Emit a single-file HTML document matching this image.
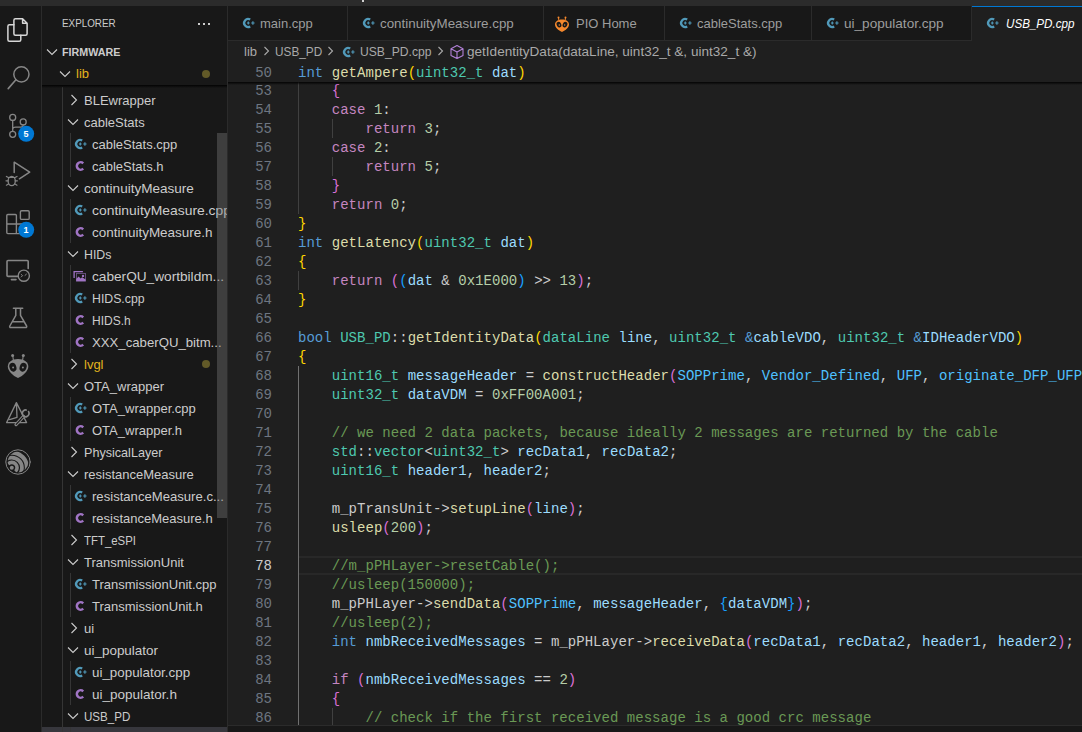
<!DOCTYPE html>
<html><head><meta charset="utf-8"><style>
*{box-sizing:border-box;margin:0;padding:0}
html,body{width:1082px;height:732px;overflow:hidden;background:#181818}
body{position:relative;font-family:"Liberation Sans",sans-serif;color:#cccccc}
.abs{position:absolute}
.code{font-family:"Liberation Mono",monospace;font-size:14px;line-height:19px;white-space:pre;color:#cccccc;letter-spacing:0.03px}
.ln{position:absolute;left:228px;width:44px;text-align:right;font-family:"Liberation Mono",monospace;font-size:14px;line-height:19px;color:#6e7681}
.cl{position:absolute;left:298px;height:19px}
</style></head><body>

<div class="abs" style="left:0;top:0;width:1082px;height:6px;background:#2b2b2b"></div>
<div class="abs" style="left:362px;top:0;width:2px;height:2px;background:#d0d0d0"></div>
<div class="abs" style="left:41px;top:6px;width:1px;height:726px;background:#2b2b2b"></div>
<div class="abs" style="left:227px;top:6px;width:1px;height:726px;background:#2b2b2b"></div>
<div class="abs" style="left:228px;top:6px;width:854px;height:34px;background:#181818"></div>
<div class="abs" style="left:228px;top:40px;width:854px;height:1px;background:#2b2b2b"></div>
<div class="abs" style="left:228px;top:41px;width:854px;height:684px;background:#1f1f1f"></div>
<div class="abs" style="left:228px;top:725px;width:854px;height:1px;background:#2b2b2b"></div>
<div class="abs" style="left:228px;top:726px;width:854px;height:6px;background:#181818"></div>
<div class="abs" style="left:228px;top:6px;width:120px;height:34px;background:#181818"></div>
<div class="abs" style="left:347px;top:6px;width:1px;height:34px;background:#2b2b2b"></div>
<svg class="abs" style="left:241px;top:15px" width="16" height="16" viewBox="0 0 16 16"><path d="M9.2 4.5A4.05 4.05 0 1 0 9.2 11.5" fill="none" stroke="#519aba" stroke-width="2.3"/><path d="M5.9 8h2.8M7.3 6.6v2.8M10.2 8h3.4M11.9 6.3v3.4" stroke="#519aba" stroke-width="1.15"/></svg>
<div class="abs" style="left:260px;top:16px;font-family:'Liberation Sans',sans-serif;font-size:13px;color:#9d9d9d;line-height:15px;white-space:pre;transform-origin:0 0;transform:scaleX(1.0000);">main.cpp</div>
<div class="abs" style="left:348px;top:6px;width:196px;height:34px;background:#181818"></div>
<div class="abs" style="left:543px;top:6px;width:1px;height:34px;background:#2b2b2b"></div>
<svg class="abs" style="left:361px;top:15px" width="16" height="16" viewBox="0 0 16 16"><path d="M9.2 4.5A4.05 4.05 0 1 0 9.2 11.5" fill="none" stroke="#519aba" stroke-width="2.3"/><path d="M5.9 8h2.8M7.3 6.6v2.8M10.2 8h3.4M11.9 6.3v3.4" stroke="#519aba" stroke-width="1.15"/></svg>
<div class="abs" style="left:380px;top:16px;font-family:'Liberation Sans',sans-serif;font-size:13px;color:#9d9d9d;line-height:15px;white-space:pre;transform-origin:0 0;transform:scaleX(1.0286);">continuityMeasure.cpp</div>
<div class="abs" style="left:544px;top:6px;width:121px;height:34px;background:#181818"></div>
<div class="abs" style="left:664px;top:6px;width:1px;height:34px;background:#2b2b2b"></div>
<svg class="abs" style="left:554px;top:15px" width="16" height="18" viewBox="0 0 16 18"><path d="M8 4.6C3.6 4.6 1 6.8 1 9.6c0 3 3.4 6 7 7.4 3.6-1.4 7-4.4 7-7.4 0-2.8-2.6-5-7-5z" fill="#f5882d"/><ellipse cx="5" cy="9.6" rx="2.3" ry="2.8" transform="rotate(-25 5 9.6)" fill="#181818"/><ellipse cx="11" cy="9.6" rx="2.3" ry="2.8" transform="rotate(25 11 9.6)" fill="#181818"/><circle cx="5.3" cy="10" r="0.7" fill="#f5882d"/><circle cx="10.7" cy="10" r="0.7" fill="#f5882d"/><path d="M4.8 5 4.5 2.6M11.2 5l.3-2.4" stroke="#f5882d" stroke-width="1"/><circle cx="4.5" cy="2.4" r="1" fill="#f5882d"/><circle cx="11.5" cy="2.4" r="1" fill="#f5882d"/></svg>
<div class="abs" style="left:576px;top:16px;font-family:'Liberation Sans',sans-serif;font-size:13px;color:#9d9d9d;line-height:15px;white-space:pre;transform-origin:0 0;transform:scaleX(1.0000);">PIO Home</div>
<div class="abs" style="left:665px;top:6px;width:147px;height:34px;background:#181818"></div>
<div class="abs" style="left:811px;top:6px;width:1px;height:34px;background:#2b2b2b"></div>
<svg class="abs" style="left:678px;top:15px" width="16" height="16" viewBox="0 0 16 16"><path d="M9.2 4.5A4.05 4.05 0 1 0 9.2 11.5" fill="none" stroke="#519aba" stroke-width="2.3"/><path d="M5.9 8h2.8M7.3 6.6v2.8M10.2 8h3.4M11.9 6.3v3.4" stroke="#519aba" stroke-width="1.15"/></svg>
<div class="abs" style="left:697px;top:16px;font-family:'Liberation Sans',sans-serif;font-size:13px;color:#9d9d9d;line-height:15px;white-space:pre;transform-origin:0 0;transform:scaleX(1.0000);">cableStats.cpp</div>
<div class="abs" style="left:812px;top:6px;width:160px;height:34px;background:#181818"></div>
<div class="abs" style="left:971px;top:6px;width:1px;height:34px;background:#2b2b2b"></div>
<svg class="abs" style="left:825px;top:15px" width="16" height="16" viewBox="0 0 16 16"><path d="M9.2 4.5A4.05 4.05 0 1 0 9.2 11.5" fill="none" stroke="#519aba" stroke-width="2.3"/><path d="M5.9 8h2.8M7.3 6.6v2.8M10.2 8h3.4M11.9 6.3v3.4" stroke="#519aba" stroke-width="1.15"/></svg>
<div class="abs" style="left:844px;top:16px;font-family:'Liberation Sans',sans-serif;font-size:13px;color:#9d9d9d;line-height:15px;white-space:pre;transform-origin:0 0;transform:scaleX(1.0438);">ui_populator.cpp</div>
<div class="abs" style="left:972px;top:6px;width:110px;height:35px;background:#1f1f1f"></div>
<svg class="abs" style="left:985px;top:15px" width="16" height="16" viewBox="0 0 16 16"><path d="M9.2 4.5A4.05 4.05 0 1 0 9.2 11.5" fill="none" stroke="#519aba" stroke-width="2.3"/><path d="M5.9 8h2.8M7.3 6.6v2.8M10.2 8h3.4M11.9 6.3v3.4" stroke="#519aba" stroke-width="1.15"/></svg>
<div class="abs" style="left:1006px;top:16px;font-family:'Liberation Sans',sans-serif;font-size:13px;color:#ffffff;line-height:15px;font-style:italic;white-space:pre;transform-origin:0 0;transform:scaleX(0.8943);">USB_PD.cpp</div>
<div class="abs" style="left:971px;top:6px;width:111px;height:1px;background:#0078d4"></div>
<div class="abs" style="left:971px;top:6px;width:1px;height:35px;background:#2b2b2b"></div>
<div class="abs" style="left:244px;top:44px;font-family:'Liberation Sans',sans-serif;font-size:13px;color:#a9a9a9;line-height:15px;white-space:pre;transform-origin:0 0;transform:scaleX(1.0000);">lib</div>
<svg class="abs" style="left:263px;top:45px" width="8" height="12" viewBox="0 0 8 12"><path d="M1.5 2l4 4-4 4" fill="none" stroke="#a9a9a9" stroke-width="1.1"/></svg>
<div class="abs" style="left:275px;top:44px;font-family:'Liberation Sans',sans-serif;font-size:13px;color:#a9a9a9;line-height:15px;white-space:pre;transform-origin:0 0;transform:scaleX(0.9071);">USB_PD</div>
<svg class="abs" style="left:327px;top:45px" width="8" height="12" viewBox="0 0 8 12"><path d="M1.5 2l4 4-4 4" fill="none" stroke="#a9a9a9" stroke-width="1.1"/></svg>
<svg class="abs" style="left:341px;top:44px" width="16" height="16" viewBox="0 0 16 16"><path d="M9.2 4.5A4.05 4.05 0 1 0 9.2 11.5" fill="none" stroke="#519aba" stroke-width="2.3"/><path d="M5.9 8h2.8M7.3 6.6v2.8M10.2 8h3.4M11.9 6.3v3.4" stroke="#519aba" stroke-width="1.15"/></svg>
<div class="abs" style="left:360px;top:44px;font-family:'Liberation Sans',sans-serif;font-size:13px;color:#a9a9a9;line-height:15px;white-space:pre;transform-origin:0 0;transform:scaleX(0.9335);">USB_PD.cpp</div>
<svg class="abs" style="left:437px;top:45px" width="8" height="12" viewBox="0 0 8 12"><path d="M1.5 2l4 4-4 4" fill="none" stroke="#a9a9a9" stroke-width="1.1"/></svg>
<svg class="abs" style="left:449px;top:44px" width="16" height="16" viewBox="0 0 16 16"><path d="M8 1.6l6 3.2v6.6L8 14.6l-6-3.2V4.8z M2 4.8 8 8l6-3.2 M8 8v6.6" fill="none" stroke="#b180d7" stroke-width="1.1" stroke-linejoin="round"/></svg>
<div class="abs" style="left:467px;top:44px;font-family:'Liberation Sans',sans-serif;font-size:13px;color:#a9a9a9;line-height:15px;white-space:pre;transform-origin:0 0;transform:scaleX(1.0431);">getIdentityData(dataLine, uint32_t &amp;, uint32_t &amp;)</div>
<div class="abs" style="left:299px;top:556px;width:783px;height:19px;border-top:2px solid #282828;border-bottom:2px solid #282828"></div>
<div class="abs" style="left:298px;top:81px;width:1px;height:133px;background:#404040"></div>
<div class="abs" style="left:332px;top:119px;width:1px;height:19px;background:#404040"></div>
<div class="abs" style="left:332px;top:157px;width:1px;height:19px;background:#404040"></div>
<div class="abs" style="left:298px;top:271px;width:1px;height:19px;background:#404040"></div>
<div class="abs" style="left:298px;top:366px;width:1px;height:359px;background:#707070"></div>
<div class="abs" style="left:332px;top:708px;width:1px;height:17px;background:#404040"></div>
<div class="code">
<div class="ln" style="top:82px;color:#6e7681">53</div>
<div class="cl" style="top:82px">    <span style="color:#da70d6">{</span></div>
<div class="ln" style="top:101px;color:#6e7681">54</div>
<div class="cl" style="top:101px">    <span style="color:#c586c0">case</span> <span style="color:#b5cea8">1</span>:</div>
<div class="ln" style="top:120px;color:#6e7681">55</div>
<div class="cl" style="top:120px">        <span style="color:#c586c0">return</span> <span style="color:#b5cea8">3</span>;</div>
<div class="ln" style="top:139px;color:#6e7681">56</div>
<div class="cl" style="top:139px">    <span style="color:#c586c0">case</span> <span style="color:#b5cea8">2</span>:</div>
<div class="ln" style="top:158px;color:#6e7681">57</div>
<div class="cl" style="top:158px">        <span style="color:#c586c0">return</span> <span style="color:#b5cea8">5</span>;</div>
<div class="ln" style="top:177px;color:#6e7681">58</div>
<div class="cl" style="top:177px">    <span style="color:#da70d6">}</span></div>
<div class="ln" style="top:196px;color:#6e7681">59</div>
<div class="cl" style="top:196px">    <span style="color:#c586c0">return</span> <span style="color:#b5cea8">0</span>;</div>
<div class="ln" style="top:215px;color:#6e7681">60</div>
<div class="cl" style="top:215px"><span style="color:#ffd700">}</span></div>
<div class="ln" style="top:234px;color:#6e7681">61</div>
<div class="cl" style="top:234px"><span style="color:#569cd6">int</span> <span style="color:#dcdcaa">getLatency</span><span style="color:#ffd700">(</span><span style="color:#4ec9b0">uint32_t</span> <span style="color:#9cdcfe">dat</span><span style="color:#ffd700">)</span></div>
<div class="ln" style="top:253px;color:#6e7681">62</div>
<div class="cl" style="top:253px"><span style="color:#ffd700">{</span></div>
<div class="ln" style="top:272px;color:#6e7681">63</div>
<div class="cl" style="top:272px">    <span style="color:#c586c0">return</span> <span style="color:#da70d6">(</span><span style="color:#179fff">(</span><span style="color:#9cdcfe">dat</span> &amp; <span style="color:#b5cea8">0x1E000</span><span style="color:#179fff">)</span> &gt;&gt; <span style="color:#b5cea8">13</span><span style="color:#da70d6">)</span>;</div>
<div class="ln" style="top:291px;color:#6e7681">64</div>
<div class="cl" style="top:291px"><span style="color:#ffd700">}</span></div>
<div class="ln" style="top:310px;color:#6e7681">65</div>
<div class="cl" style="top:310px"></div>
<div class="ln" style="top:329px;color:#6e7681">66</div>
<div class="cl" style="top:329px"><span style="color:#569cd6">bool</span> <span style="color:#4ec9b0">USB_PD</span>::<span style="color:#dcdcaa">getIdentityData</span><span style="color:#ffd700">(</span><span style="color:#4ec9b0">dataLine</span> <span style="color:#9cdcfe">line</span>, <span style="color:#4ec9b0">uint32_t</span> <span style="color:#569cd6">&amp;</span><span style="color:#9cdcfe">cableVDO</span>, <span style="color:#4ec9b0">uint32_t</span> <span style="color:#569cd6">&amp;</span><span style="color:#9cdcfe">IDHeaderVDO</span><span style="color:#ffd700">)</span></div>
<div class="ln" style="top:348px;color:#6e7681">67</div>
<div class="cl" style="top:348px"><span style="color:#ffd700">{</span></div>
<div class="ln" style="top:367px;color:#6e7681">68</div>
<div class="cl" style="top:367px">    <span style="color:#4ec9b0">uint16_t</span> <span style="color:#9cdcfe">messageHeader</span> = <span style="color:#dcdcaa">constructHeader</span><span style="color:#da70d6">(</span><span style="color:#4fc1ff">SOPPrime</span>, <span style="color:#4fc1ff">Vendor_Defined</span>, <span style="color:#4fc1ff">UFP</span>, <span style="color:#4fc1ff">originate_DFP_UFP</span>, </div>
<div class="ln" style="top:386px;color:#6e7681">69</div>
<div class="cl" style="top:386px">    <span style="color:#4ec9b0">uint32_t</span> <span style="color:#9cdcfe">dataVDM</span> = <span style="color:#b5cea8">0xFF00A001</span>;</div>
<div class="ln" style="top:405px;color:#6e7681">70</div>
<div class="cl" style="top:405px"></div>
<div class="ln" style="top:424px;color:#6e7681">71</div>
<div class="cl" style="top:424px">    <span style="color:#6a9955">// we need 2 data packets, because ideally 2 messages are returned by the cable</span></div>
<div class="ln" style="top:443px;color:#6e7681">72</div>
<div class="cl" style="top:443px">    <span style="color:#4ec9b0">std</span>::<span style="color:#4ec9b0">vector</span>&lt;<span style="color:#4ec9b0">uint32_t</span>&gt; <span style="color:#9cdcfe">recData1</span>, <span style="color:#9cdcfe">recData2</span>;</div>
<div class="ln" style="top:462px;color:#6e7681">73</div>
<div class="cl" style="top:462px">    <span style="color:#4ec9b0">uint16_t</span> <span style="color:#9cdcfe">header1</span>, <span style="color:#9cdcfe">header2</span>;</div>
<div class="ln" style="top:481px;color:#6e7681">74</div>
<div class="cl" style="top:481px"></div>
<div class="ln" style="top:500px;color:#6e7681">75</div>
<div class="cl" style="top:500px">    m_pTransUnit-&gt;<span style="color:#dcdcaa">setupLine</span><span style="color:#da70d6">(</span><span style="color:#9cdcfe">line</span><span style="color:#da70d6">)</span>;</div>
<div class="ln" style="top:519px;color:#6e7681">76</div>
<div class="cl" style="top:519px">    <span style="color:#dcdcaa">usleep</span><span style="color:#da70d6">(</span><span style="color:#b5cea8">200</span><span style="color:#da70d6">)</span>;</div>
<div class="ln" style="top:538px;color:#6e7681">77</div>
<div class="cl" style="top:538px"></div>
<div class="ln" style="top:557px;color:#cccccc">78</div>
<div class="cl" style="top:557px">    <span style="color:#6a9955">//m_pPHLayer-&gt;resetCable();</span></div>
<div class="ln" style="top:576px;color:#6e7681">79</div>
<div class="cl" style="top:576px">    <span style="color:#6a9955">//usleep(150000);</span></div>
<div class="ln" style="top:595px;color:#6e7681">80</div>
<div class="cl" style="top:595px">    m_pPHLayer-&gt;<span style="color:#dcdcaa">sendData</span><span style="color:#da70d6">(</span><span style="color:#4fc1ff">SOPPrime</span>, <span style="color:#9cdcfe">messageHeader</span>, <span style="color:#179fff">{</span><span style="color:#9cdcfe">dataVDM</span><span style="color:#179fff">}</span><span style="color:#da70d6">)</span>;</div>
<div class="ln" style="top:614px;color:#6e7681">81</div>
<div class="cl" style="top:614px">    <span style="color:#6a9955">//usleep(2);</span></div>
<div class="ln" style="top:633px;color:#6e7681">82</div>
<div class="cl" style="top:633px">    <span style="color:#569cd6">int</span> <span style="color:#9cdcfe">nmbReceivedMessages</span> = m_pPHLayer-&gt;<span style="color:#dcdcaa">receiveData</span><span style="color:#da70d6">(</span><span style="color:#9cdcfe">recData1</span>, <span style="color:#9cdcfe">recData2</span>, <span style="color:#9cdcfe">header1</span>, <span style="color:#9cdcfe">header2</span><span style="color:#da70d6">)</span>;</div>
<div class="ln" style="top:652px;color:#6e7681">83</div>
<div class="cl" style="top:652px"></div>
<div class="ln" style="top:671px;color:#6e7681">84</div>
<div class="cl" style="top:671px">    <span style="color:#c586c0">if</span> <span style="color:#da70d6">(</span><span style="color:#9cdcfe">nmbReceivedMessages</span> == <span style="color:#b5cea8">2</span><span style="color:#da70d6">)</span></div>
<div class="ln" style="top:690px;color:#6e7681">85</div>
<div class="cl" style="top:690px">    <span style="color:#da70d6">{</span></div>
<div class="ln" style="top:709px;color:#6e7681">86</div>
<div class="cl" style="top:709px">        <span style="color:#6a9955">// check if the first received message is a good crc message</span></div>
</div>
<div class="abs" style="left:228px;top:62px;width:854px;height:20px;background:#1f1f1f"></div>
<div class="abs" style="left:228px;top:82px;width:854px;height:3px;background:linear-gradient(rgba(0,0,0,0.9),rgba(0,0,0,0))"></div>
<div class="code"><div class="ln" style="top:64px">50</div><div class="cl" style="top:64px"><span style="color:#569cd6">int</span> <span style="color:#dcdcaa">getAmpere</span><span style="color:#ffd700">(</span><span style="color:#4ec9b0">uint32_t</span> <span style="color:#9cdcfe">dat</span><span style="color:#ffd700">)</span></div></div>
<div class="abs" style="left:62px;top:16px;font-family:'Liberation Sans',sans-serif;font-size:11px;line-height:14px;color:#cccccc;white-space:pre;transform-origin:0 0;transform:scaleX(0.8945);">EXPLORER</div>
<div class="abs" style="left:198px;top:23px;width:2px;height:2px;background:#cccccc"></div>
<div class="abs" style="left:203px;top:23px;width:2px;height:2px;background:#cccccc"></div>
<div class="abs" style="left:208px;top:23px;width:2px;height:2px;background:#cccccc"></div>
<svg class="abs" style="left:46px;top:48px" width="12" height="8" viewBox="0 0 12 8"><path d="M1 1.5l5 5 5-5" fill="none" stroke="#cccccc" stroke-width="1.1"/></svg>
<div class="abs" style="left:62px;top:45px;font-family:'Liberation Sans',sans-serif;font-size:11px;line-height:14px;font-weight:bold;color:#cccccc;white-space:pre;transform-origin:0 0;transform:scaleX(0.9768);">FIRMWARE</div>
<div class="abs" style="left:42px;top:727px;width:185px;height:22px;background:#37373d"></div>
<div class="abs" style="left:62px;top:87px;width:1px;height:645px;background:#353535"></div>
<div class="abs" style="left:70px;top:133px;width:1px;height:44px;background:#353535"></div>
<div class="abs" style="left:70px;top:199px;width:1px;height:44px;background:#353535"></div>
<div class="abs" style="left:70px;top:265px;width:1px;height:88px;background:#353535"></div>
<div class="abs" style="left:70px;top:397px;width:1px;height:44px;background:#353535"></div>
<div class="abs" style="left:70px;top:485px;width:1px;height:44px;background:#353535"></div>
<div class="abs" style="left:70px;top:573px;width:1px;height:44px;background:#353535"></div>
<div class="abs" style="left:70px;top:661px;width:1px;height:44px;background:#353535"></div>
<div class="abs" style="left:70px;top:727px;width:1px;height:22px;background:#353535"></div>
<svg class="abs" style="left:70px;top:94px" width="8" height="12" viewBox="0 0 8 12"><path d="M1.5 1l5 5-5 5" fill="none" stroke="#cccccc" stroke-width="1.1"/></svg>
<div class="abs" style="left:84px;top:93px;font-family:'Liberation Sans',sans-serif;font-size:13px;line-height:15px;color:#cccccc;white-space:pre;transform-origin:0 0;transform:scaleX(1.0000);">BLEwrapper</div>
<svg class="abs" style="left:67px;top:118px" width="12" height="8" viewBox="0 0 12 8"><path d="M1 1.5l5 5 5-5" fill="none" stroke="#cccccc" stroke-width="1.1"/></svg>
<div class="abs" style="left:84px;top:115px;font-family:'Liberation Sans',sans-serif;font-size:13px;line-height:15px;color:#cccccc;white-space:pre;transform-origin:0 0;transform:scaleX(1.0000);">cableStats</div>
<svg class="abs" style="left:73px;top:136px" width="16" height="16" viewBox="0 0 16 16"><path d="M9.2 4.5A4.05 4.05 0 1 0 9.2 11.5" fill="none" stroke="#519aba" stroke-width="2.3"/><path d="M5.9 8h2.8M7.3 6.6v2.8M10.2 8h3.4M11.9 6.3v3.4" stroke="#519aba" stroke-width="1.15"/></svg>
<div class="abs" style="left:92px;top:137px;font-family:'Liberation Sans',sans-serif;font-size:13px;line-height:15px;color:#cccccc;white-space:pre;transform-origin:0 0;transform:scaleX(1.0000);">cableStats.cpp</div>
<svg class="abs" style="left:73px;top:158px" width="16" height="16" viewBox="0 0 16 16"><path d="M10.2 5.3A3.75 3.75 0 1 0 10.2 10.7" fill="none" stroke="#a074c4" stroke-width="2.5"/></svg>
<div class="abs" style="left:92px;top:159px;font-family:'Liberation Sans',sans-serif;font-size:13px;line-height:15px;color:#cccccc;white-space:pre;transform-origin:0 0;transform:scaleX(1.0000);">cableStats.h</div>
<svg class="abs" style="left:67px;top:184px" width="12" height="8" viewBox="0 0 12 8"><path d="M1 1.5l5 5 5-5" fill="none" stroke="#cccccc" stroke-width="1.1"/></svg>
<div class="abs" style="left:84px;top:181px;font-family:'Liberation Sans',sans-serif;font-size:13px;line-height:15px;color:#cccccc;white-space:pre;transform-origin:0 0;transform:scaleX(1.0417);">continuityMeasure</div>
<svg class="abs" style="left:73px;top:202px" width="16" height="16" viewBox="0 0 16 16"><path d="M9.2 4.5A4.05 4.05 0 1 0 9.2 11.5" fill="none" stroke="#519aba" stroke-width="2.3"/><path d="M5.9 8h2.8M7.3 6.6v2.8M10.2 8h3.4M11.9 6.3v3.4" stroke="#519aba" stroke-width="1.15"/></svg>
<div class="abs" style="left:92px;top:199px;width:135px;height:22px;overflow:hidden">
<div class="abs" style="left:0px;top:4px;font-family:'Liberation Sans',sans-serif;font-size:13px;line-height:15px;color:#cccccc;white-space:pre;transform-origin:0 0;transform:scaleX(1.0686);">continuityMeasure.cpp</div>
</div>
<svg class="abs" style="left:73px;top:224px" width="16" height="16" viewBox="0 0 16 16"><path d="M10.2 5.3A3.75 3.75 0 1 0 10.2 10.7" fill="none" stroke="#a074c4" stroke-width="2.5"/></svg>
<div class="abs" style="left:92px;top:225px;font-family:'Liberation Sans',sans-serif;font-size:13px;line-height:15px;color:#cccccc;white-space:pre;transform-origin:0 0;transform:scaleX(1.0357);">continuityMeasure.h</div>
<svg class="abs" style="left:67px;top:250px" width="12" height="8" viewBox="0 0 12 8"><path d="M1 1.5l5 5 5-5" fill="none" stroke="#cccccc" stroke-width="1.1"/></svg>
<div class="abs" style="left:84px;top:247px;font-family:'Liberation Sans',sans-serif;font-size:13px;line-height:15px;color:#cccccc;white-space:pre;transform-origin:0 0;transform:scaleX(0.9484);">HIDs</div>
<svg class="abs" style="left:73px;top:268px" width="16" height="16" viewBox="0 0 16 16"><path d="M1.1 10V3.6h8.8" fill="none" stroke="#a074c4" stroke-width="1.3"/><rect x="3.5" y="5.4" width="9" height="7.6" fill="none" stroke="#6e5585" stroke-width="0.9"/><path d="M3.2 13.2v-2.2l2.4-2.6 2 2.1 1.6-1.2 3.4 2.2v1.7z" fill="#a074c4"/><circle cx="10" cy="7.9" r="1.2" fill="#a074c4"/></svg>
<div class="abs" style="left:92px;top:269px;font-family:'Liberation Sans',sans-serif;font-size:13px;line-height:15px;color:#cccccc;white-space:pre;transform-origin:0 0;transform:scaleX(1.0500);">caberQU_wortbildm...</div>
<svg class="abs" style="left:73px;top:290px" width="16" height="16" viewBox="0 0 16 16"><path d="M9.2 4.5A4.05 4.05 0 1 0 9.2 11.5" fill="none" stroke="#519aba" stroke-width="2.3"/><path d="M5.9 8h2.8M7.3 6.6v2.8M10.2 8h3.4M11.9 6.3v3.4" stroke="#519aba" stroke-width="1.15"/></svg>
<div class="abs" style="left:92px;top:291px;font-family:'Liberation Sans',sans-serif;font-size:13px;line-height:15px;color:#cccccc;white-space:pre;transform-origin:0 0;transform:scaleX(0.9454);">HIDS.cpp</div>
<svg class="abs" style="left:73px;top:312px" width="16" height="16" viewBox="0 0 16 16"><path d="M10.2 5.3A3.75 3.75 0 1 0 10.2 10.7" fill="none" stroke="#a074c4" stroke-width="2.5"/></svg>
<div class="abs" style="left:92px;top:313px;font-family:'Liberation Sans',sans-serif;font-size:13px;line-height:15px;color:#cccccc;white-space:pre;transform-origin:0 0;transform:scaleX(0.9259);">HIDS.h</div>
<svg class="abs" style="left:73px;top:334px" width="16" height="16" viewBox="0 0 16 16"><path d="M10.2 5.3A3.75 3.75 0 1 0 10.2 10.7" fill="none" stroke="#a074c4" stroke-width="2.5"/></svg>
<div class="abs" style="left:92px;top:335px;font-family:'Liberation Sans',sans-serif;font-size:13px;line-height:15px;color:#cccccc;white-space:pre;transform-origin:0 0;transform:scaleX(1.0134);">XXX_caberQU_bitm...</div>
<svg class="abs" style="left:70px;top:358px" width="8" height="12" viewBox="0 0 8 12"><path d="M1.5 1l5 5-5 5" fill="none" stroke="#cccccc" stroke-width="1.1"/></svg>
<div class="abs" style="left:84px;top:357px;font-family:'Liberation Sans',sans-serif;font-size:13px;line-height:15px;color:#e2b41e;white-space:pre;transform-origin:0 0;transform:scaleX(1.0000);">lvgl</div>
<div class="abs" style="left:202px;top:360px;width:8px;height:8px;border-radius:50%;background:#625a28"></div>
<svg class="abs" style="left:67px;top:382px" width="12" height="8" viewBox="0 0 12 8"><path d="M1 1.5l5 5 5-5" fill="none" stroke="#cccccc" stroke-width="1.1"/></svg>
<div class="abs" style="left:84px;top:379px;font-family:'Liberation Sans',sans-serif;font-size:13px;line-height:15px;color:#cccccc;white-space:pre;transform-origin:0 0;transform:scaleX(1.0000);">OTA_wrapper</div>
<svg class="abs" style="left:73px;top:400px" width="16" height="16" viewBox="0 0 16 16"><path d="M9.2 4.5A4.05 4.05 0 1 0 9.2 11.5" fill="none" stroke="#519aba" stroke-width="2.3"/><path d="M5.9 8h2.8M7.3 6.6v2.8M10.2 8h3.4M11.9 6.3v3.4" stroke="#519aba" stroke-width="1.15"/></svg>
<div class="abs" style="left:92px;top:401px;font-family:'Liberation Sans',sans-serif;font-size:13px;line-height:15px;color:#cccccc;white-space:pre;transform-origin:0 0;transform:scaleX(1.0000);">OTA_wrapper.cpp</div>
<svg class="abs" style="left:73px;top:422px" width="16" height="16" viewBox="0 0 16 16"><path d="M10.2 5.3A3.75 3.75 0 1 0 10.2 10.7" fill="none" stroke="#a074c4" stroke-width="2.5"/></svg>
<div class="abs" style="left:92px;top:423px;font-family:'Liberation Sans',sans-serif;font-size:13px;line-height:15px;color:#cccccc;white-space:pre;transform-origin:0 0;transform:scaleX(1.0000);">OTA_wrapper.h</div>
<svg class="abs" style="left:70px;top:446px" width="8" height="12" viewBox="0 0 8 12"><path d="M1.5 1l5 5-5 5" fill="none" stroke="#cccccc" stroke-width="1.1"/></svg>
<div class="abs" style="left:84px;top:445px;font-family:'Liberation Sans',sans-serif;font-size:13px;line-height:15px;color:#cccccc;white-space:pre;transform-origin:0 0;transform:scaleX(0.9686);">PhysicalLayer</div>
<svg class="abs" style="left:67px;top:470px" width="12" height="8" viewBox="0 0 12 8"><path d="M1 1.5l5 5 5-5" fill="none" stroke="#cccccc" stroke-width="1.1"/></svg>
<div class="abs" style="left:84px;top:467px;font-family:'Liberation Sans',sans-serif;font-size:13px;line-height:15px;color:#cccccc;white-space:pre;transform-origin:0 0;transform:scaleX(1.0000);">resistanceMeasure</div>
<svg class="abs" style="left:73px;top:488px" width="16" height="16" viewBox="0 0 16 16"><path d="M9.2 4.5A4.05 4.05 0 1 0 9.2 11.5" fill="none" stroke="#519aba" stroke-width="2.3"/><path d="M5.9 8h2.8M7.3 6.6v2.8M10.2 8h3.4M11.9 6.3v3.4" stroke="#519aba" stroke-width="1.15"/></svg>
<div class="abs" style="left:92px;top:489px;font-family:'Liberation Sans',sans-serif;font-size:13px;line-height:15px;color:#cccccc;white-space:pre;transform-origin:0 0;transform:scaleX(1.0086);">resistanceMeasure.c...</div>
<svg class="abs" style="left:73px;top:510px" width="16" height="16" viewBox="0 0 16 16"><path d="M10.2 5.3A3.75 3.75 0 1 0 10.2 10.7" fill="none" stroke="#a074c4" stroke-width="2.5"/></svg>
<div class="abs" style="left:92px;top:511px;font-family:'Liberation Sans',sans-serif;font-size:13px;line-height:15px;color:#cccccc;white-space:pre;transform-origin:0 0;transform:scaleX(1.0000);">resistanceMeasure.h</div>
<svg class="abs" style="left:70px;top:534px" width="8" height="12" viewBox="0 0 8 12"><path d="M1.5 1l5 5-5 5" fill="none" stroke="#cccccc" stroke-width="1.1"/></svg>
<div class="abs" style="left:84px;top:533px;font-family:'Liberation Sans',sans-serif;font-size:13px;line-height:15px;color:#cccccc;white-space:pre;transform-origin:0 0;transform:scaleX(0.8776);">TFT_eSPI</div>
<svg class="abs" style="left:67px;top:558px" width="12" height="8" viewBox="0 0 12 8"><path d="M1 1.5l5 5 5-5" fill="none" stroke="#cccccc" stroke-width="1.1"/></svg>
<div class="abs" style="left:84px;top:555px;font-family:'Liberation Sans',sans-serif;font-size:13px;line-height:15px;color:#cccccc;white-space:pre;transform-origin:0 0;transform:scaleX(1.0000);">TransmissionUnit</div>
<svg class="abs" style="left:73px;top:576px" width="16" height="16" viewBox="0 0 16 16"><path d="M9.2 4.5A4.05 4.05 0 1 0 9.2 11.5" fill="none" stroke="#519aba" stroke-width="2.3"/><path d="M5.9 8h2.8M7.3 6.6v2.8M10.2 8h3.4M11.9 6.3v3.4" stroke="#519aba" stroke-width="1.15"/></svg>
<div class="abs" style="left:92px;top:577px;font-family:'Liberation Sans',sans-serif;font-size:13px;line-height:15px;color:#cccccc;white-space:pre;transform-origin:0 0;transform:scaleX(1.0000);">TransmissionUnit.cpp</div>
<svg class="abs" style="left:73px;top:598px" width="16" height="16" viewBox="0 0 16 16"><path d="M10.2 5.3A3.75 3.75 0 1 0 10.2 10.7" fill="none" stroke="#a074c4" stroke-width="2.5"/></svg>
<div class="abs" style="left:92px;top:599px;font-family:'Liberation Sans',sans-serif;font-size:13px;line-height:15px;color:#cccccc;white-space:pre;transform-origin:0 0;transform:scaleX(1.0000);">TransmissionUnit.h</div>
<svg class="abs" style="left:70px;top:622px" width="8" height="12" viewBox="0 0 8 12"><path d="M1.5 1l5 5-5 5" fill="none" stroke="#cccccc" stroke-width="1.1"/></svg>
<div class="abs" style="left:84px;top:621px;font-family:'Liberation Sans',sans-serif;font-size:13px;line-height:15px;color:#cccccc;white-space:pre;transform-origin:0 0;transform:scaleX(1.0000);">ui</div>
<svg class="abs" style="left:67px;top:646px" width="12" height="8" viewBox="0 0 12 8"><path d="M1 1.5l5 5 5-5" fill="none" stroke="#cccccc" stroke-width="1.1"/></svg>
<div class="abs" style="left:84px;top:643px;font-family:'Liberation Sans',sans-serif;font-size:13px;line-height:15px;color:#cccccc;white-space:pre;transform-origin:0 0;transform:scaleX(1.0341);">ui_populator</div>
<svg class="abs" style="left:73px;top:664px" width="16" height="16" viewBox="0 0 16 16"><path d="M9.2 4.5A4.05 4.05 0 1 0 9.2 11.5" fill="none" stroke="#519aba" stroke-width="2.3"/><path d="M5.9 8h2.8M7.3 6.6v2.8M10.2 8h3.4M11.9 6.3v3.4" stroke="#519aba" stroke-width="1.15"/></svg>
<div class="abs" style="left:92px;top:665px;font-family:'Liberation Sans',sans-serif;font-size:13px;line-height:15px;color:#cccccc;white-space:pre;transform-origin:0 0;transform:scaleX(1.0281);">ui_populator.cpp</div>
<svg class="abs" style="left:73px;top:686px" width="16" height="16" viewBox="0 0 16 16"><path d="M10.2 5.3A3.75 3.75 0 1 0 10.2 10.7" fill="none" stroke="#a074c4" stroke-width="2.5"/></svg>
<div class="abs" style="left:92px;top:687px;font-family:'Liberation Sans',sans-serif;font-size:13px;line-height:15px;color:#cccccc;white-space:pre;transform-origin:0 0;transform:scaleX(1.0393);">ui_populator.h</div>
<svg class="abs" style="left:67px;top:712px" width="12" height="8" viewBox="0 0 12 8"><path d="M1 1.5l5 5 5-5" fill="none" stroke="#cccccc" stroke-width="1.1"/></svg>
<div class="abs" style="left:84px;top:709px;font-family:'Liberation Sans',sans-serif;font-size:13px;line-height:15px;color:#cccccc;white-space:pre;transform-origin:0 0;transform:scaleX(0.8918);">USB_PD</div>
<div class="abs" style="left:42px;top:63px;width:185px;height:22px;background:#181818"></div>
<div class="abs" style="left:42px;top:85px;width:185px;height:3px;background:linear-gradient(rgba(0,0,0,0.9),rgba(0,0,0,0))"></div>
<svg class="abs" style="left:59px;top:70px" width="12" height="8" viewBox="0 0 12 8"><path d="M1 1.5l5 5 5-5" fill="none" stroke="#cccccc" stroke-width="1.1"/></svg>
<div class="abs" style="left:76px;top:66px;font-family:'Liberation Sans',sans-serif;font-size:13px;line-height:15px;color:#e2b41e;white-space:pre;transform-origin:0 0;transform:scaleX(1.0000);">lib</div>
<div class="abs" style="left:202px;top:70px;width:8px;height:8px;border-radius:50%;background:#625a28"></div>
<div class="abs" style="left:217px;top:133px;width:10px;height:385px;background:rgba(121,121,121,0.4)"></div>
<svg class="abs" style="left:0;top:0" width="41" height="732" viewBox="0 0 41 732" fill="none" stroke-linecap="round" stroke-linejoin="round">
<path d="M13.9 20.2a1.5 1.5 0 0 1 1.5-1.5h7.2l4.5 4.5v10.5a1.5 1.5 0 0 1-1.5 1.5H15.4a1.5 1.5 0 0 1-1.5-1.5z M22.6 18.7v4.5h4.5" stroke="#d7d7d7" stroke-width="1.5"/>
<path d="M13.9 24.7H9.4a1.5 1.5 0 0 0-1.5 1.5v13.5a1.5 1.5 0 0 0 1.5 1.5h9.9a1.5 1.5 0 0 0 1.5-1.5v-4.5" stroke="#d7d7d7" stroke-width="1.5"/>
<circle cx="21.4" cy="74.3" r="7.6" stroke="#868686" stroke-width="1.5"/>
<path d="M15.9 79.8 8.2 88.6" stroke="#868686" stroke-width="1.6"/>
<circle cx="12.7" cy="117.4" r="3" stroke="#868686" stroke-width="1.3"/>
<circle cx="12.7" cy="134.3" r="3" stroke="#868686" stroke-width="1.3"/>
<circle cx="23.2" cy="121.9" r="3" stroke="#868686" stroke-width="1.3"/>
<path d="M12.7 120.4v10.9 M12.7 129.2c0-1.5 1-2 3-2h3.5c2 0 4-1 4-2.3" stroke="#868686" stroke-width="1.3"/>
<path d="M14.2 172.4V162.2l15.5 10-10.3 6.6" stroke="#868686" stroke-width="1.5"/>
<ellipse cx="11.7" cy="181" rx="3.6" ry="4.6" stroke="#868686" stroke-width="1.3"/>
<path d="M8.5 177.5h6.4 M6.4 176.4l2 1.2 M17 176.4l-2 1.2 M6 180.8h2.2 M15.2 180.8h2.2 M6.4 185.2l2-1.2 M17 185.2l-2-1.2" stroke="#868686" stroke-width="1.2"/>
<path d="M6.8 215.5a1 1 0 0 1 1-1h7.6a1 1 0 0 1 1 1v17.1a1 1 0 0 1-1 1H7.8a1 1 0 0 1-1-1z M6.8 224h9.6 M16.4 224h6v9.6h-6" stroke="#868686" stroke-width="1.4"/>
<rect x="20.4" y="210.8" width="8.8" height="8.6" rx="1.2" stroke="#868686" stroke-width="1.4"/>
<path d="M17.5 276.4H8a1 1 0 0 1-1-1V261.5a1 1 0 0 1 1-1h19.2a1 1 0 0 1 1 1v7 M11.4 279.6h4.6" stroke="#868686" stroke-width="1.6"/>
<circle cx="23.8" cy="275.7" r="5.6" stroke="#868686" stroke-width="1.4"/>
<path d="M21.2 274.4l1.4 1.2-1.4 1.4 M26.4 274.2l-1.4 1.2" stroke="#868686" stroke-width="1"/>
<path d="M13.4 308.2h9.3 M15.8 308.6v6.8L9.8 326a1 1 0 0 0 .9 1.5h15a1 1 0 0 0 .9-1.5L20.5 315.4v-6.8 M13 321.8h10" stroke="#868686" stroke-width="1.5"/>
<path d="M18 359C11.8 359 7.8 362.2 7.8 366.6c0 4.4 5 9.4 10.2 11.4 5.2-2 10.3-7 10.3-11.4 0-4.4-4-7.6-10.3-7.6z" fill="#868686" stroke="none"/>
<ellipse cx="12.9" cy="367.2" rx="3.4" ry="4.5" transform="rotate(-20 12.9 367.2)" fill="#181818" stroke="none"/>
<ellipse cx="23.1" cy="367.2" rx="3.4" ry="4.5" transform="rotate(20 23.1 367.2)" fill="#181818" stroke="none"/>
<circle cx="13.1" cy="367.6" r="1" fill="#868686" stroke="none"/><circle cx="22.9" cy="367.6" r="1" fill="#868686" stroke="none"/>
<path d="M13.3 359.6l-.5-3.6 M22.7 359.6l.5-3.6" stroke="#868686" stroke-width="1.1"/>
<circle cx="12.6" cy="355.4" r="1.5" fill="#868686" stroke="none"/><circle cx="23.3" cy="355.4" r="1.5" fill="#868686" stroke="none"/>
<path d="M16.4 402.6 6.6 422.6h20 z M16.4 402.6l.6 14.8 M9.6 419.6l7.4-2.2" stroke="#868686" stroke-width="1.3"/>
<path d="M16 424.6l7.6-8.2" stroke="#868686" stroke-width="3.2"/>
<path d="M16.2 424.4l7.2-7.8" stroke="#181818" stroke-width="1.1"/>
<path d="M28.6 411.6a3.4 3.4 0 1 1-2.4-1.6" stroke="#868686" stroke-width="1.7"/>
<circle cx="26.6" cy="413.6" r="1" fill="#181818" stroke="none"/>
<defs><clipPath id="espc"><circle cx="18" cy="462" r="10.4"/></clipPath></defs>
<circle cx="18" cy="462" r="12.2" stroke="#868686" stroke-width="1"/>
<g clip-path="url(#espc)" stroke="#868686" stroke-linecap="butt">
<path d="M8.05 463.95A5.3 5.3 0 1 1 15.48 471.51" stroke-width="3.6"/>
<path d="M4.59 460.49A10.2 10.2 0 1 1 18.89 475.04" stroke-width="3.8"/>
<path d="M1.05 456.95A15.2 15.2 0 1 1 22.36 478.63" stroke-width="4.2"/>
</g>
<circle cx="11.8" cy="467.7" r="2" fill="#868686" stroke="none"/>
<circle cx="26.2" cy="133.8" r="8" fill="#0078d4" stroke="none"/>
<circle cx="26.2" cy="229.8" r="8" fill="#0078d4" stroke="none"/>
</svg>
<div class="abs" style="left:18px;top:127px;width:16px;height:14px;font-size:9px;font-weight:bold;line-height:14px;text-align:center;color:#ffffff">5</div>
<div class="abs" style="left:18px;top:223px;width:16px;height:14px;font-size:9px;font-weight:bold;line-height:14px;text-align:center;color:#ffffff">1</div>
</body></html>
